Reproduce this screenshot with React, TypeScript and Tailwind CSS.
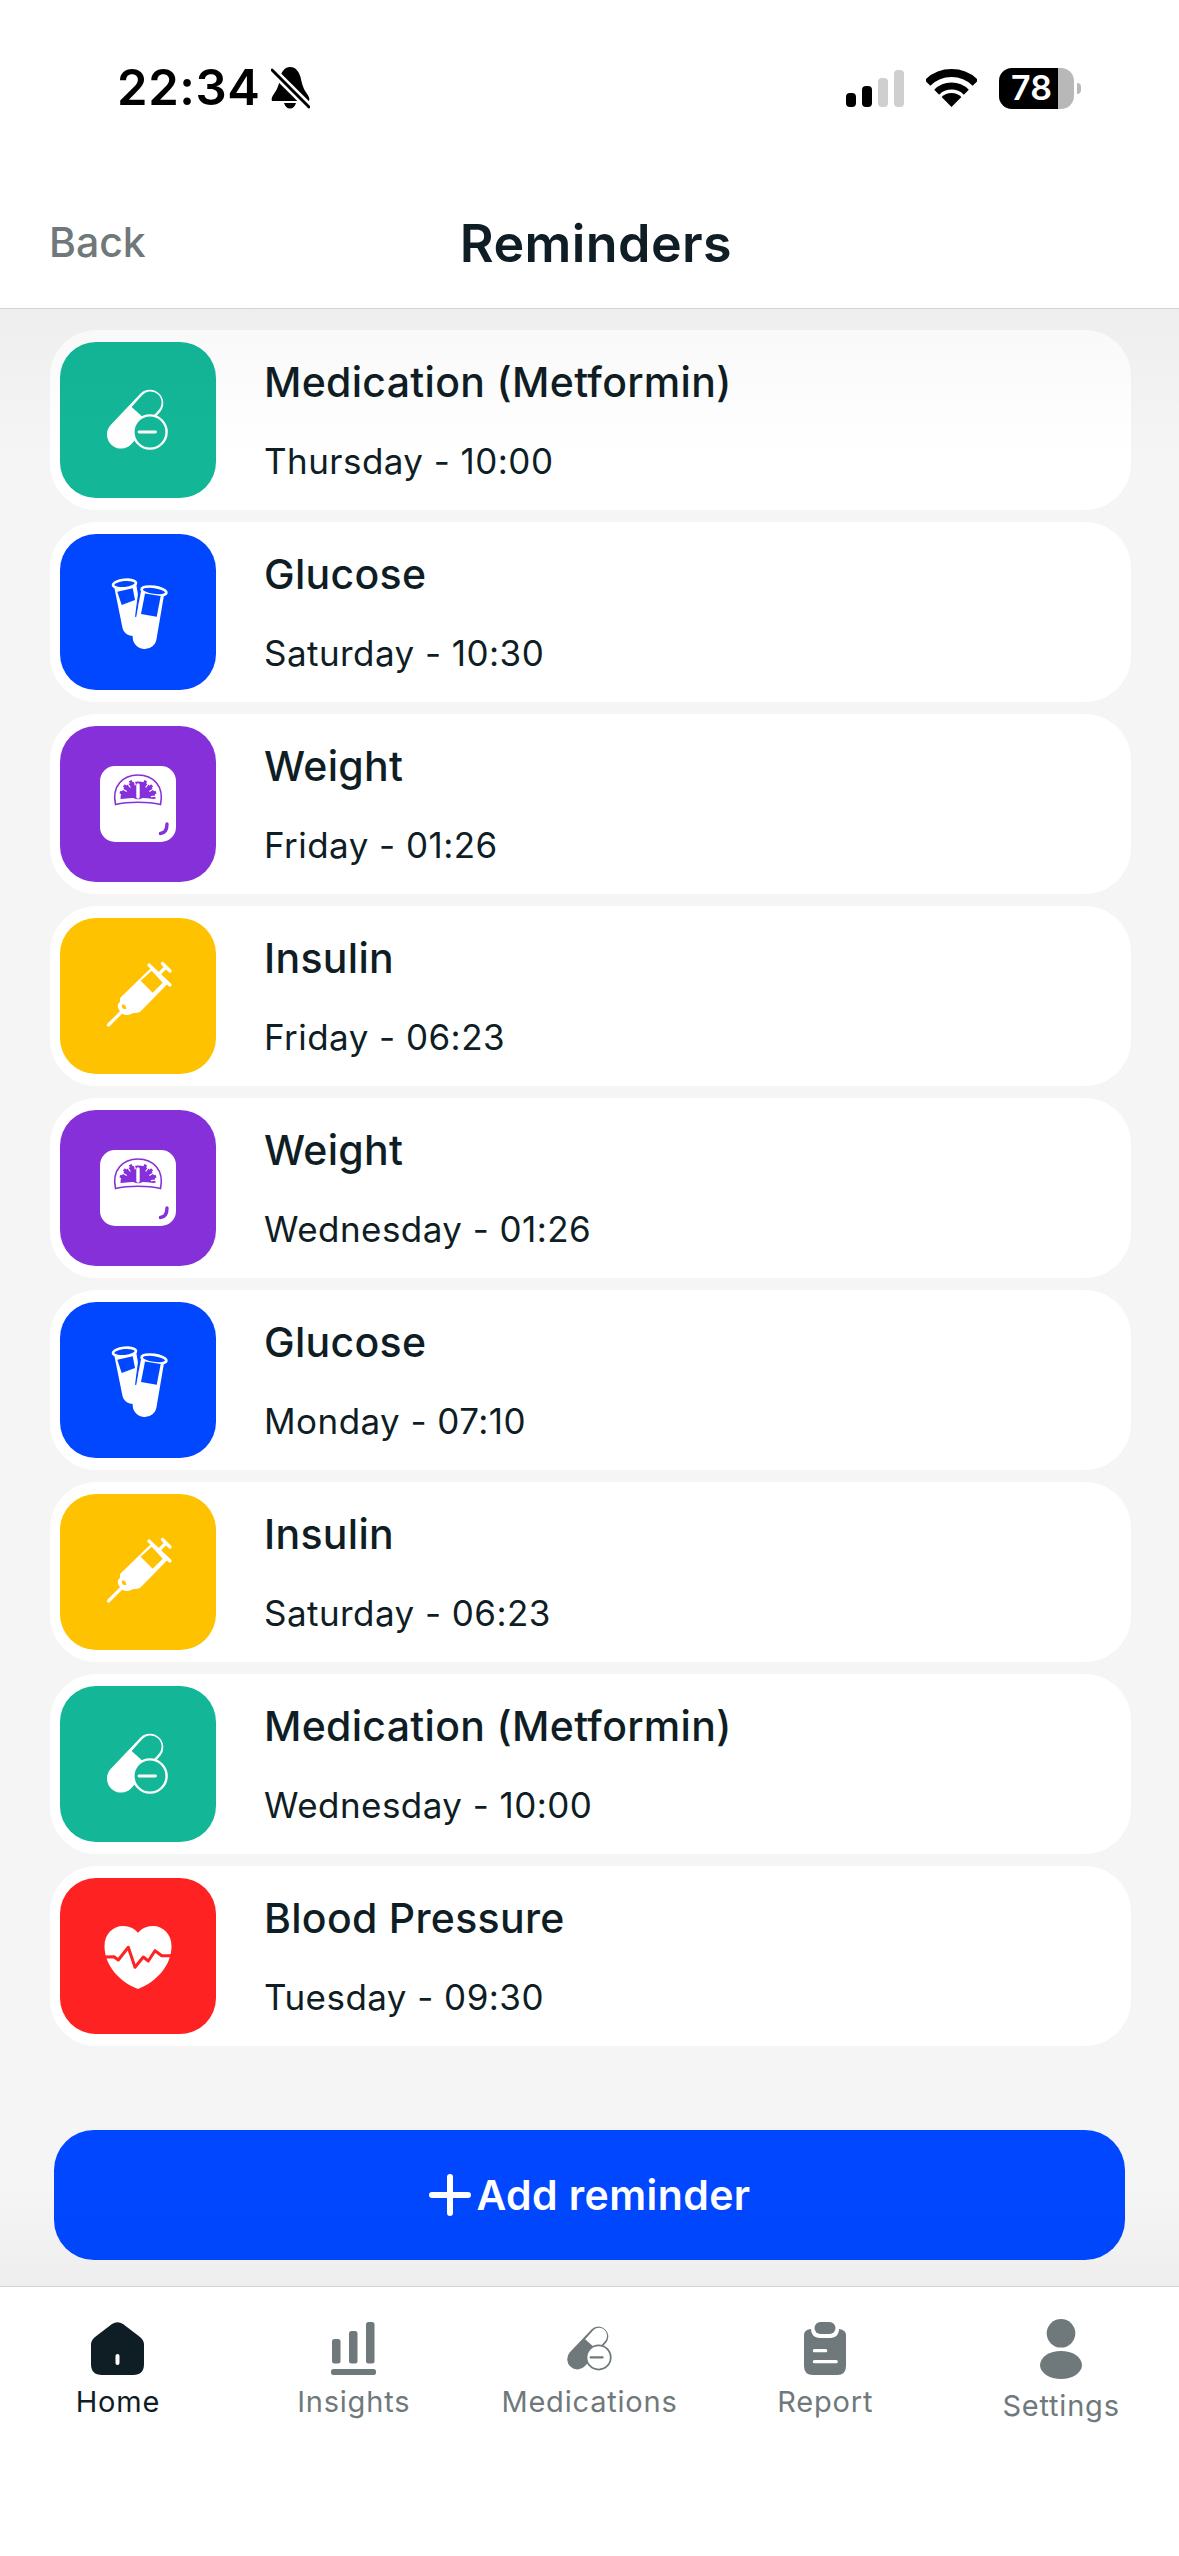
import React from "react";

const BLUE = "#0047ff";
const GREEN = "#13b798";
const PURPLE = "#8530d9";
const YELLOW = "#ffc200";
const RED = "#ff2222";
const GRAY = "#6f797b";

function PillMark({ fg, bg }: { fg: string; bg: string }) {
  return (
    <>
      <path d="M80.5 51.5 A13.5 13.5 0 0 1 100.5 69.5 L71.4 101.9 A14 14 0 0 1 50.6 83.1Z" fill={fg} />
      <path d="M82.3 53.1 A11 11 0 0 1 98.7 67.9 L88 79.8 L71.6 65Z" fill={bg} />
      <circle cx="90" cy="90" r="16.6" fill={bg} stroke={fg} strokeWidth="2.4" />
      <path d="M79 90 H95.5" stroke={fg} strokeWidth="2.8" strokeLinecap="round" />
    </>
  );
}

function PillIcon() {
  return (
    <svg viewBox="0 0 156 156" className="size-full">
      <PillMark fg="#ffffff" bg={GREEN} />
    </svg>
  );
}

function TubesIcon() {
  return (
    <svg viewBox="0 0 156 156" className="size-full">
      <path d="M54 52 L76 49 L84 96 L73 102 C67 102 63.5 98 62.5 94Z" fill="#fff" />
      <ellipse cx="64.5" cy="50" rx="11.5" ry="4.2" transform="rotate(-6 64.5 50)" fill={BLUE} stroke="#fff" strokeWidth="2.6" />
      <path d="M57.3 57.7 L72.7 54.3 L75 66 L61.7 71Z" fill={BLUE} />
      <path d="M79.5 56 L76 83" stroke={BLUE} strokeWidth="2" />
      <path d="M81 57 L104 61 L96.7 104 A12 12 0 0 1 72.7 102 Z" fill="#fff" />
      <ellipse cx="94" cy="57" rx="12.5" ry="4.2" transform="rotate(8 94 57)" fill={BLUE} stroke="#fff" strokeWidth="2.6" />
      <path d="M85 59.5 L100.7 62 L96.7 82.7 L81 80Z" fill={BLUE} />
    </svg>
  );
}

function ScaleIcon() {
  const ticks = [-72, -48, -24, 24, 48, 72];
  return (
    <svg viewBox="0 0 156 156" className="size-full">
      <rect x="40" y="40" width="76" height="76" rx="15" fill="#fff" />
      <path d="M55.5 78.5 C51.5 60 63 49 78 49 C93 49 104.5 60 100.5 78.5 C88 75.5 68 75.5 55.5 78.5Z" fill="#fff" stroke={PURPLE} strokeWidth="1.6" />
      <path d="M60.5 73 C60.5 62 68 55.5 78 55.5 C88 55.5 95.5 62 95.5 73 C86 71.5 70 71.5 60.5 73Z" fill={PURPLE} />
      {ticks.map((a) => (
        <line key={a} x1="78" y1="72" x2="78" y2="53" stroke={PURPLE} strokeWidth="3" transform={`rotate(${a} 78 72)`} />
      ))}
      {ticks.map((a) => (
        <line key={`w${a}`} x1="78" y1="59" x2="78" y2="54" stroke="#fff" strokeWidth="1.2" transform={`rotate(${a + 12} 78 72)`} />
      ))}
      <path d="M78 71 V59" stroke="#fff" strokeWidth="3.4" strokeLinecap="round" />
      <path d="M107 98 C107 104 104.5 107 100.5 107.5" fill="none" stroke={PURPLE} strokeWidth="3.4" strokeLinecap="round" />
    </svg>
  );
}

function SyringeIcon() {
  return (
    <svg viewBox="0 0 156 156" className="size-full">
      <path d="M48.5 107 L61 94.5" stroke="#fff" strokeWidth="3.2" strokeLinecap="round" />
      <path d="M89 47 L110 67" stroke="#fff" strokeWidth="3.2" strokeLinecap="round" />
      <path d="M102.5 45.5 L110 53" stroke="#fff" strokeWidth="3.2" strokeLinecap="round" />
      <path d="M97 58 L106 49" stroke="#fff" strokeWidth="3.2" />
      <path d="M91 50 L107.5 66 L81 93 C78 96 74 94 71 96 C67 98 62 97 60 93 C57 90 57 86 60 84 L60 80Z" fill="#fff" />
      <path d="M80.7 62.7 L91.7 52.7 L102.7 64.7 L92.7 74.7Z" fill={YELLOW} />
      <path d="M62 87 C63.5 84.5 66 88 66.5 90.5 C64 92 61 90 62 87Z" fill={YELLOW} />
    </svg>
  );
}

function HeartIcon() {
  return (
    <svg viewBox="0 0 156 156" className="size-full">
      <path d="M78 111 C60 104 44.5 88 44.5 68 C44.5 56 53 48 63 48 C70 48 75 51 78 55 C81 51 86 48 93 48 C103 48 111.5 56 111.5 68 C111.5 88 96 104 78 111Z" fill="#fff" />
      <polyline points="44,79 54,78.7 58.3,82 68.3,69.3 75,89.3 83.3,79 88.3,83 95,72.7 101.7,77.7 112,77.7" fill="none" stroke={RED} strokeWidth="3" strokeLinejoin="round" />
    </svg>
  );
}

type Row = { title: string; sub: string; color: string; icon: React.ReactNode };

const rows: Row[] = [
  { title: "Medication (Metformin)", sub: "Thursday - 10:00", color: "bg-[#13b798]", icon: <PillIcon /> },
  { title: "Glucose", sub: "Saturday - 10:30", color: "bg-[#0047ff]", icon: <TubesIcon /> },
  { title: "Weight", sub: "Friday - 01:26", color: "bg-[#8530d9]", icon: <ScaleIcon /> },
  { title: "Insulin", sub: "Friday - 06:23", color: "bg-[#ffc200]", icon: <SyringeIcon /> },
  { title: "Weight", sub: "Wednesday - 01:26", color: "bg-[#8530d9]", icon: <ScaleIcon /> },
  { title: "Glucose", sub: "Monday - 07:10", color: "bg-[#0047ff]", icon: <TubesIcon /> },
  { title: "Insulin", sub: "Saturday - 06:23", color: "bg-[#ffc200]", icon: <SyringeIcon /> },
  { title: "Medication (Metformin)", sub: "Wednesday - 10:00", color: "bg-[#13b798]", icon: <PillIcon /> },
  { title: "Blood Pressure", sub: "Tuesday - 09:30", color: "bg-[#ff2222]", icon: <HeartIcon /> },
];

function StatusBar() {
  return (
    <div className="mt-[66px] flex h-[44px] items-center justify-between pl-[117px] pr-[98px]">
      <div className="flex items-center gap-[10px]">
        <span className="text-[49px] font-semibold leading-[44px] tracking-[0.6px] text-black">22:34</span>
        <svg viewBox="0 0 39 42" className="h-[42px] w-[39px]">
          <path d="M19 0 C25 0 28 5 29.5 10 C31 17 32 21 35.5 26 C38 29.5 39 32 38 34 H1 C0 32 1 29.5 3.5 26 C7 21 8 17 9.5 10 C10 5 14 0 19 0Z" fill="#000" />
          <path d="M13 36 H25 C24 39.5 22 41.5 19 41.5 C16 41.5 14 39.5 13 36Z" fill="#000" />
          <path d="M1 3 L38 40" stroke="#fff" strokeWidth="8" />
          <path d="M1 3 L38 40" stroke="#000" strokeWidth="3" strokeLinecap="round" />
        </svg>
      </div>
      <div className="flex items-center">
        <svg viewBox="0 0 58 37" className="h-[37px] w-[58px]">
          <rect x="0" y="23" width="10" height="14" rx="4" fill="#000" />
          <rect x="16" y="16" width="10" height="21" rx="4" fill="#000" />
          <rect x="32" y="8" width="10" height="29" rx="4" fill="#cfcfcf" />
          <rect x="48" y="0" width="10" height="37" rx="4" fill="#cfcfcf" />
        </svg>
        <svg viewBox="0 0 51 38" className="ml-[22px] h-[38px] w-[51px]">
          <path d="M1.5 14 A34 34 0 0 1 49.5 14" fill="none" stroke="#000" strokeWidth="8" />
          <path d="M10.7 23.2 A21 21 0 0 1 40.3 23.2" fill="none" stroke="#000" strokeWidth="7" />
          <path d="M25.5 38 L15.6 28.1 A14 14 0 0 1 35.4 28.1Z" fill="#000" />
        </svg>
        <div className="relative ml-[22px] flex h-[41px] w-[75px] items-center overflow-hidden rounded-[13px] bg-[#b8b8b8]">
          <div className="flex h-full w-[59px] items-center justify-center bg-black pl-[6px] text-[34px] font-semibold leading-none text-white">78</div>
        </div>
        <div className="ml-[3px] h-[11px] w-[4px] rounded-r-full bg-[#b8b8b8]" />
      </div>
    </div>
  );
}

function Header() {
  return (
    <header className="h-[309px] shrink-0 border-b border-[#d2d2d2] bg-white">
      <StatusBar />
      <div className="mt-[102px] flex items-start gap-[314px] pl-[49px]">
        <span className="mt-[5px] text-[41px] font-medium leading-[50px] text-[#6f797b]">Back</span>
        <h1 className="text-[52px] font-semibold leading-[64px] tracking-[0.4px] text-[#0f1d24]">Reminders</h1>
      </div>
    </header>
  );
}

function Card({ row }: { row: Row }) {
  return (
    <div className="flex h-[180px] items-center rounded-[46px] bg-white pl-[10px]">
      <div className={`size-[156px] shrink-0 rounded-[36px] ${row.color}`}>{row.icon}</div>
      <div className="ml-[48px] text-[#0f1d24]">
        <div className="text-[41px] font-[450] leading-[50px] tracking-[0.3px]">{row.title}</div>
        <div className="mt-[32px] text-[35px] font-normal leading-[44px] tracking-[0.45px]">{row.sub}</div>
      </div>
    </div>
  );
}

function TabLabel({ children, active }: { children: React.ReactNode; active?: boolean }) {
  return (
    <span className={`mt-[9px] text-[29px] leading-[36px] tracking-[0.8px] ${active ? "text-[#0f1d24]" : "text-[#6f797b]"}`}>
      {children}
    </span>
  );
}

function TabBar() {
  return (
    <nav className="grid h-[270px] shrink-0 grid-cols-5 border-t border-[#d2d2d2] bg-white pt-[35px]">
      <div className="flex flex-col items-center">
        <svg viewBox="0 0 53 53" className="h-[53px] w-[53px]">
          <path d="M21 2 Q26.5 -1.5 32 2 L49 15 Q53 18 53 23 L53 42 Q53 53 42 53 L11 53 Q0 53 0 42 L0 23 Q0 18 4 15Z" fill="#0f1d24" />
          <rect x="24.5" y="32" width="4" height="11" rx="2" fill="#fff" />
        </svg>
        <TabLabel active>Home</TabLabel>
      </div>
      <div className="flex flex-col items-center">
        <svg viewBox="0 0 45 53" className="h-[53px] w-[45px]">
          <rect x="1" y="17" width="8.5" height="24.5" rx="2.5" fill={GRAY} />
          <rect x="18" y="9" width="8.5" height="32.5" rx="2.5" fill={GRAY} />
          <rect x="35" y="0" width="8.5" height="41.5" rx="2.5" fill={GRAY} />
          <rect x="0" y="47" width="45" height="6" rx="2.5" fill={GRAY} />
        </svg>
        <TabLabel>Insights</TabLabel>
      </div>
      <div className="flex flex-col items-center">
        <div className="flex h-[53px] items-center">
          <svg viewBox="47 47 61 63" className="h-[46px] w-[45px]">
            <PillMark fg={GRAY} bg="#ffffff" />
          </svg>
        </div>
        <TabLabel>Medications</TabLabel>
      </div>
      <div className="flex flex-col items-center">
        <svg viewBox="0 0 42 53" className="h-[53px] w-[42px]">
          <rect x="10.5" y="0" width="21" height="12" rx="6" fill={GRAY} />
          <path d="M0 13 Q0 8 6.5 7 L7 7 C7 12 10 16 16 16 L26 16 C32 16 35 12 35 7 Q42 8 42 13 L42 44 Q42 53 33 53 L9 53 Q0 53 0 44Z" fill={GRAY} />
          <rect x="8.8" y="27" width="14.5" height="3.3" rx="1.6" fill="#fff" />
          <rect x="8.8" y="38" width="25" height="3.3" rx="1.6" fill="#fff" />
        </svg>
        <TabLabel>Report</TabLabel>
      </div>
      <div className="flex flex-col items-center">
        <svg viewBox="0 0 42 60" className="-mt-[3px] h-[60px] w-[42px]">
          <circle cx="21" cy="14.3" r="14.3" fill={GRAY} />
          <ellipse cx="21" cy="46" rx="21" ry="14" fill={GRAY} />
        </svg>
        <TabLabel>Settings</TabLabel>
      </div>
    </nav>
  );
}

export default function App() {
  return (
    <div className="flex h-[2556px] w-[1179px] flex-col overflow-hidden bg-white [font-family:Inter,sans-serif]">
      <Header />
      <main className="relative flex min-h-0 flex-1 flex-col bg-[#f5f5f5]">
        <div className="flex flex-col gap-[12px] pl-[50px] pr-[48px] pt-[21px]">
          {rows.map((r, i) => (
            <Card key={i} row={r} />
          ))}
        </div>
        <button className="mx-[54px] mt-[84px] flex h-[130px] items-center justify-center gap-[6px] rounded-[40px] bg-[#0047ff] text-[41px] font-semibold leading-none tracking-[0.4px] text-white">
          <svg viewBox="0 0 42 42" className="size-[42px]">
            <path d="M21 3 V39 M3 21 H39" stroke="#fff" strokeWidth="6" strokeLinecap="round" />
          </svg>
          <span>Add reminder</span>
        </button>
        <div className="pointer-events-none absolute inset-x-0 top-0 h-[150px] bg-gradient-to-b from-black/[0.028] to-transparent" />
        <div className="pointer-events-none absolute inset-x-0 bottom-0 h-[100px] bg-gradient-to-t from-black/[0.028] to-transparent" />
      </main>
      <TabBar />
    </div>
  );
}
